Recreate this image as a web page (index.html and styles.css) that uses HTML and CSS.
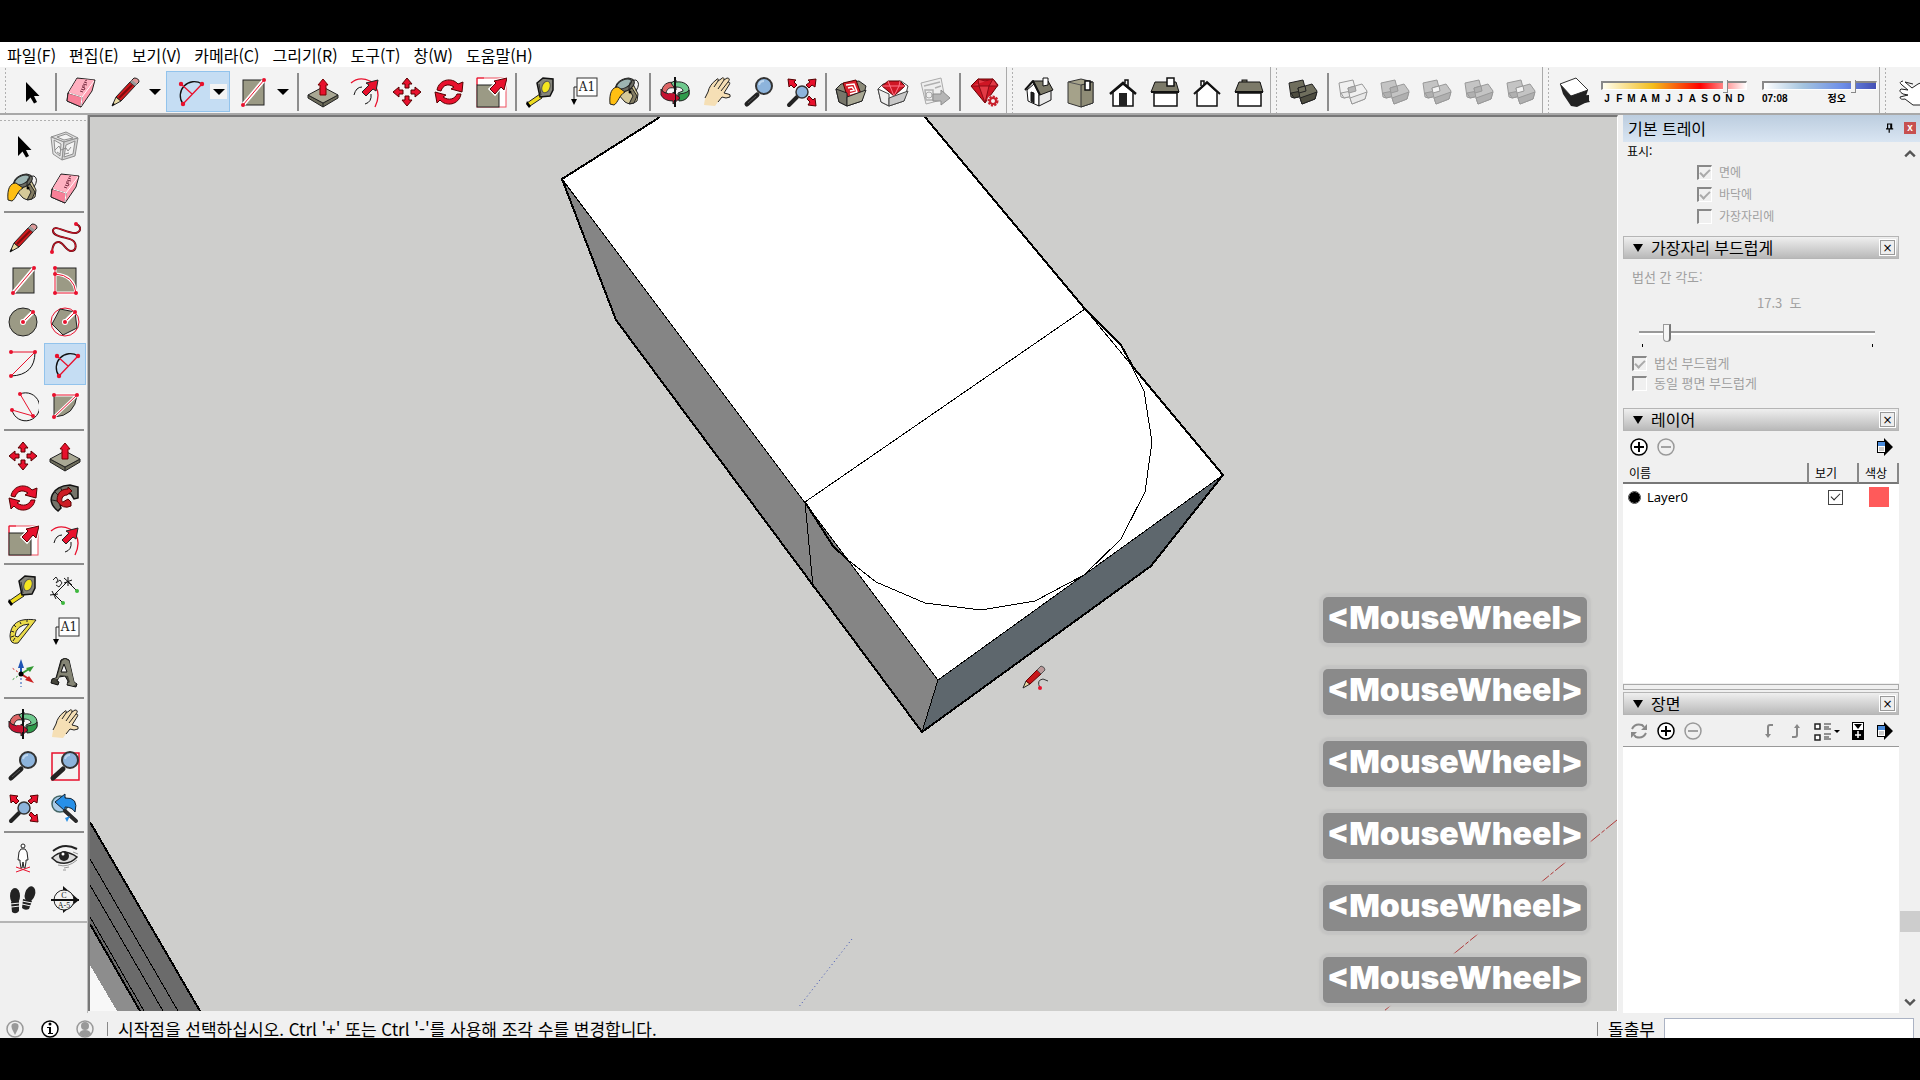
FILE: index.html
```html
<!DOCTYPE html>
<html lang="ko">
<head>
    <meta charset="UTF-8">
    <title>SketchUp</title>
    <link rel="stylesheet" href="styles.css">
</head>
<body>

<!-- icon set -->
<svg class="icon-defs" aria-hidden="true">
    <symbol id="i-select" viewBox="0 0 32 32">
        <path d="M11 6V26L15.500 21.500L19 27.500L22 26L19 20H24.500Z" fill="#000"/>
    </symbol>
    <symbol id="i-component" viewBox="0 0 32 32">
        <g fill="none" stroke="#8f8f8f">
            <path d="M2 7L17 2L29 8L15 12Z" fill="#ddd"/>
            <path d="M2 7L15 12L13 30L4 24Z" fill="#e4e4e4"/>
            <path d="M15 12L29 8L26 26L13 30Z" fill="#d2d2d2"/>
            <path d="M5 10L12 14L11 26L6 22ZM17 15L26 11L24 24L15 27ZM8 7L17 4L24 8L15 10Z" fill="#f3f3f3"/>
            <path d="M6 20L10 16L12 20L17 18L19 21L22 17M8 22L11 24M16 24L20 23"/>
        </g>
    </symbol>
    <symbol id="i-eraser" viewBox="0 0 32 32">
        <g stroke="#222" stroke-linejoin="round">
            <path d="M12 2L30 4L27 15L16 31L2 25L3 17Z" fill="#ff9db0"/>
            <path d="M3 17L17 21L16 31L2 25Z" fill="#f77f97"/>
        </g>
        <path d="M12 3L29 4L17 20L4 16Z" fill="#ffb0c0"/>
        <path d="M4 17L17 21L29 5M17 21L16 30" stroke="#fff" fill="none"/>
        <path d="M15 15L18 16M16 13L19 14L20 12L17 11M17 10H20M18 8L22 9M19 6L22 7M20 5L22 4" stroke="#7d3045" fill="none"/>
    </symbol>
    <symbol id="i-pencil" viewBox="0 0 32 32">
        <g stroke="#222" stroke-linejoin="round">
            <path d="M3 30L7 21L12 25Z" fill="#e8d9a2"/>
            <path d="M7 21L21 6L26 10L12 25Z" fill="#d2191c"/>
            <path d="M21 6L25 2Q30 2 30 6L26 10Z" fill="#d99"/>
        </g>
        <path d="M21 6L23 4L28 8L26 10Z" fill="#999"/>
        <path d="M10 22L23 9" stroke="#7c0d10" stroke-width="2"/>
        <path d="M3 30L4 27L6 28Z"/>
    </symbol>
    <symbol id="i-freehand" viewBox="0 0 32 32">
        <g fill="none" stroke-linecap="round">
            <path d="M3 30Q4 19 10 20C15 21 17 29 22 29C28 29 28 21 23 18C18 15 3 15 4 8C6 2 18 12 27 11C33 9 32 4 27 2" stroke="#5d0a10" stroke-width="2"/>
            <path d="M3 30Q4 19 10 20C15 21 17 29 22 29C28 29 28 21 23 18C18 15 3 15 4 8C6 2 18 12 27 11C33 9 32 4 27 2" stroke="#d8172a"/>
        </g>
        <circle cx="3" cy="30" r="2" fill="#e8112d"/><circle cx="27" cy="2" r="2" fill="#e8112d"/>
    </symbol>
    <symbol id="i-rect" viewBox="0 0 32 32">
        <rect x="6" y="4" width="21" height="25" fill="#9b9a85" stroke="#222"/>
        <path d="M6 29L27 4" stroke="#fff" stroke-width="4"/>
        <path d="M6 29L27 4" stroke="#e8112d"/>
        <circle cx="6" cy="29" r="2" fill="#e8112d"/><circle cx="27" cy="4" r="2" fill="#e8112d"/>
    </symbol>
    <symbol id="i-rotrect" viewBox="0 0 32 32">
        <rect x="6" y="4" width="21" height="25" fill="#9b9a85" stroke="#222"/>
        <path d="M6 4V29H27Q25 11 6 10" fill="none" stroke="#fff" stroke-width="3"/>
        <path d="M6 4V29H27Q25 11 6 10" fill="none" stroke="#e8112d"/>
        <g fill="#e8112d"><circle cx="6" cy="4" r="2"/><circle cx="6" cy="10" r="2"/><circle cx="6" cy="29" r="2"/><circle cx="27" cy="29" r="2"/></g>
    </symbol>
    <symbol id="i-circle" viewBox="0 0 32 32">
        <circle cx="16" cy="16" r="14" fill="#9b9a85" stroke="#222"/>
        <path d="M16 16L26 6" stroke="#fff" stroke-width="4"/><path d="M16 16L26 6" stroke="#e8112d"/>
        <circle cx="16" cy="16" r="3" fill="#fff"/>
        <g fill="#e8112d"><circle cx="16" cy="16" r="2"/><circle cx="26" cy="6" r="2"/></g>
    </symbol>
    <symbol id="i-polygon" viewBox="0 0 32 32">
        <circle cx="16" cy="16" r="14" fill="none" stroke="#e8112d"/>
        <path d="M11 3L26 6L28 22L14 29L3 18Z" fill="#9b9a85" stroke="#222"/>
        <path d="M16 16L26 6" stroke="#fff" stroke-width="4"/><path d="M16 16L26 6" stroke="#e8112d"/>
        <circle cx="16" cy="16" r="3" fill="#fff"/>
        <g fill="#e8112d"><circle cx="16" cy="16" r="2"/><circle cx="26" cy="6" r="2"/></g>
    </symbol>
    <symbol id="i-arc" viewBox="0 0 32 32">
        <path d="M28 4Q28 27 4 28" fill="none" stroke="#111"/>
        <path d="M4 4H28L4 28" fill="none" stroke="#e8112d"/>
        <g fill="#e8112d"><circle cx="4" cy="4" r="2"/><circle cx="28" cy="4" r="2"/><circle cx="4" cy="28" r="2"/></g>
    </symbol>
    <symbol id="i-arc2" viewBox="0 0 32 32">
        <path d="M10 28A14 14 0 0 1 29 8" fill="none" stroke="#111" stroke-width="1.300"/>
        <path d="M10 28L29 8M8 8L19 18" fill="none" stroke="#e8112d" stroke-width="1.300"/>
        <g fill="#e8112d"><circle cx="8" cy="8" r="2.200"/><circle cx="29" cy="8" r="2.200"/><circle cx="10" cy="28" r="2.200"/></g>
    </symbol>
    <symbol id="i-arc3" viewBox="0 0 32 32">
        <path d="M13 4A14 14 0 1 1 5 20" fill="none" stroke="#111"/>
        <path d="M13 4L26 26L5 20" fill="none" stroke="#e8112d"/>
        <g fill="#e8112d"><circle cx="13" cy="4" r="2"/><circle cx="26" cy="26" r="2"/><circle cx="5" cy="20" r="2"/></g>
    </symbol>
    <symbol id="i-pie" viewBox="0 0 32 32">
        <path d="M5 5H28Q26 26 5 27Z" fill="#9b9a85" stroke="#222"/>
        <path d="M5 5H28L5 27" fill="none" stroke="#fff" stroke-width="3"/>
        <path d="M5 5H28L5 27" fill="none" stroke="#e8112d"/>
        <g fill="#e8112d"><circle cx="5" cy="5" r="2"/><circle cx="28" cy="5" r="2"/><circle cx="5" cy="27" r="2"/></g>
    </symbol>
    <symbol id="i-pushpull" viewBox="0 0 32 32">
        <g stroke="#222" stroke-linejoin="round">
            <path d="M1 19V22L16 31L31 22V19L16 27Z" fill="#6d6c5a"/>
            <path d="M1 19L16 11L31 19L16 27Z" fill="#a9a894"/>
            <path d="M16 27V31"/>
            <path d="M16 3L21 9H19V19H13V9H11Z" fill="#e8112d" stroke="#700"/>
        </g>
    </symbol>
    <symbol id="i-offset" viewBox="0 0 32 32">
        <path d="M2 7Q10 0 21 5Q34 14 26 31" fill="none" stroke="#e8112d" stroke-width="1.300"/>
        <path d="M5 19Q7 11 13 11M22 18Q23 26 16 28" fill="none" stroke="#111"/>
        <path d="M29 4L27 15L24 13L17 20L13 16L20 9L17 7Z" fill="#e8112d" stroke="#222"/>
    </symbol>
    <symbol id="i-move" viewBox="0 0 32 32">
        <g fill="#e8112d" stroke="#500">
            <path d="M16 2L21 8H18V12H14V8H11Z"/>
            <path d="M30 16L24 21V18H20V14H24V11Z"/>
            <path d="M16 30L11 24H14V20H18V24H21Z"/>
            <path d="M2 16L8 11V14H12V18H8V21Z"/>
        </g>
    </symbol>
    <symbol id="i-rotate" viewBox="0 0 32 32">
        <g fill="#e8112d" stroke="#500">
            <path d="M4 14C6 3 19 1 25 8L30 6L29 16L18 13L21 11C15 7 10 9 8 15Z"/>
            <path d="M28 18C26 29 13 31 7 24L4 27L2 16L13 19L10 21C16 25 22 23 24 18Z"/>
        </g>
    </symbol>
    <symbol id="i-scale" viewBox="0 0 32 32">
        <rect x="2" y="2" width="29" height="29" fill="#fff" stroke="#ef5060"/>
        <path d="M2 9V2H9" fill="none" stroke="#e8112d"/>
        <rect x="2" y="9" width="22" height="22" fill="#9b9a85" stroke="#222"/>
        <path d="M32 2L29 14L26 11L20 18L15 13L21 7L19 5Z" fill="#e8112d" stroke="#fff" stroke-width="3"/>
        <path d="M32 2L29 14L26 11L20 18L15 13L21 7L19 5Z" fill="#e8112d" stroke="#500"/>
    </symbol>
    <symbol id="i-follow" viewBox="0 0 32 32">
        <path d="M9 29C-4 19 3 4 21 3L29 5V16L25 17L22 12C13 9 9 17 12 26Z" fill="#75746a" stroke="#111" stroke-width="1.500"/>
        <path d="M5 9L10 14M11 5L14 10M3 18L8 19" stroke="#222"/>
        <path d="M8 19C8 9 14 7 19 7V5L23 9L18 13C12 13 12 20 14 20L19 17L22 20V24Q14 28 8 19Z" fill="#cc1c24" stroke="#500"/>
    </symbol>
    <symbol id="i-tape" viewBox="0 0 32 32">
        <path d="M2 27L15 18L17 22L5 30Z" fill="#eedc1f" stroke="#222"/>
        <path d="M2 25L6 30L4 32L1 28Z"/>
        <path d="M12 7L18 2L28 3V14L25 20L15 21Z" fill="#85857b" stroke="#111" stroke-width="1.500"/>
        <ellipse cx="21" cy="11" rx="4" ry="6" fill="#f4e51f" stroke="#555" transform="rotate(20 21 11)"/>
        <path d="M14 8L16 19" stroke="#333"/>
    </symbol>
    <symbol id="i-text" viewBox="0 0 32 32">
        <path d="M11 11H7V23" fill="none" stroke="#222"/>
        <path d="M4 23H10L7 29Z"/>
        <rect x="10" y="2" width="20" height="18" fill="#fff" stroke="#333"/>
        <text x="20" y="15" class="icon-text">A1</text>
    </symbol>
    <symbol id="i-paint" viewBox="0 0 32 32">
        <g stroke="#222" stroke-linejoin="round">
            <path d="M24 8L29 18L28 25Q22 30 16 26L8 17L11 11Z" fill="#d5c999"/>
            <path d="M23 12L28 20L25 27L20 28L24 20L20 14Z" fill="#837c62"/>
            <ellipse cx="16" cy="9" rx="10" ry="6" fill="#6b6b62" transform="rotate(-25 16 9)"/>
            <ellipse cx="15" cy="8" rx="8" ry="4" fill="#9db5b3" transform="rotate(-25 15 8)"/>
            <path d="M20 15Q19 3 27 4Q32 7 27 15" fill="none"/>
            <path d="M1 28C0 17 3 11 9 11L16 16C10 19 9 27 5 29Z" fill="#ffbf12"/>
        </g>
        <circle cx="21" cy="16" r="1.500"/>
    </symbol>
    <symbol id="i-dimension" viewBox="0 0 32 32">
        <path d="M5 21L19 7M3 17L7 25M1 21L9 20M15 4L23 11M15 9L23 6M19 3V12M5 20L14 29M19 8L28 17" fill="none" stroke="#111"/>
        <circle cx="14" cy="29" r="2" fill="#3db83d"/><circle cx="28" cy="17" r="2" fill="#3db83d"/>
        <path d="M4 6L7 3L9 6L7 9L11 6L13 9L10 13L7 11" fill="none" stroke="#222"/>
    </symbol>
    <symbol id="i-protractor" viewBox="0 0 32 32">
        <path d="M3 20C4 5 15 2 29 4L11 27Q3 29 3 20Z" fill="#eadb4a" stroke="#222"/>
        <path d="M8 20Q9 9 22 8L11 21Z" fill="#f3f3f3" stroke="#222"/>
        <path d="M4 15L7 16M7 9L9 11M13 6L14 8M20 4V6M4 21L7 20M6 25L8 22" stroke="#222"/>
    </symbol>
    <symbol id="i-axes" viewBox="0 0 32 32">
        <path d="M14 16V29" stroke="#2055b5" stroke-dasharray="2 2"/>
        <path d="M14 16L5 10" stroke="#c22" stroke-dasharray="2 2"/>
        <path d="M14 16L5 22" stroke="#393" stroke-dasharray="2 2"/>
        <path d="M14 16V5" stroke="#2055b5" stroke-width="2"/><path d="M14 1L17 10H11Z" fill="#2055b5"/>
        <path d="M14 16L22 11" stroke="#393" stroke-width="2"/><path d="M27 8L23 14L19 10Z" fill="#393"/>
        <path d="M14 16L22 21" stroke="#c22" stroke-width="2"/><path d="M27 25L18 22L22 18Z" fill="#c22"/>
        <circle cx="14" cy="16" r="2.500"/>
    </symbol>
    <symbol id="i-3dtext" viewBox="0 0 32 32">
        <path d="M3 21L7 20L12 2L16 0L20 2L25 24L28 26L27 29L18 27L19 23L16 18L10 19L8 23L10 24L9 27L2 25Z" fill="#46463c" stroke="#111"/>
        <path d="M16 1L20 3L25 24L27 26L24 28L18 26L21 24L19 18L11 17L9 21L5 21L8 20L13 3Z" fill="#858575"/>
        <path d="M15 6L18 14H12Z" fill="#f3f3f3" stroke="#111"/>
    </symbol>
    <symbol id="i-orbit" viewBox="0 0 32 32">
        <g stroke="#222">
            <path d="M3 14C4 7 12 5 15 7V12C10 11 8 13 7 17L4 17Z" fill="#d66"/>
            <path d="M12 7L17 4V6C25 5 30 9 30 14V18Q27 24 19 24V17L24 15C24 12 20 11 17 11V14Z" fill="#6fc98e"/>
            <path d="M30 14V19Q27 25 20 25V18Q29 17 30 14Z" fill="#2f9b4b"/>
            <path d="M2 13V19Q5 25 14 25V28L21 22L14 16V18Q4 18 2 13Z" fill="#c41230"/>
        </g>
        <path d="M16 1V31" stroke="#111" stroke-width="2"/>
        <path d="M10 17L16 18V24L10 24Z" fill="#c41230"/>
    </symbol>
    <symbol id="i-pan" viewBox="0 0 32 32">
        <path d="M3 29C4 22 5 19 7 16C8 11 11 7 15 4Q18 1 18 5L20 3Q23 0 24 3L26 2Q30 2 27 6Q30 5 28 9L23 17L27 18Q30 18 29 21Q25 23 21 21L17 26L14 30Z" fill="#f5dfb5"/>
        <path d="M4 22L7 16C8 11 11 7 15 4Q18 1 17 5L13 11M17 5L20 3Q23 0 23 4L17 13M23 4L26 2Q30 2 27 6L20 15M27 6Q30 6 28 9L23 17L27 18Q30 18 29 21Q25 23 21 21L17 26" fill="none" stroke="#222"/>
    </symbol>
    <symbol id="i-zoom" viewBox="0 0 32 32">
        <path d="M4 28L14 19" stroke="#222" stroke-width="5" stroke-linecap="round"/>
        <path d="M5 27L13 20" stroke="#555"/>
        <circle cx="21" cy="10" r="8" fill="#8db4dc" stroke="#333" stroke-width="2"/>
        <path d="M16 9Q17 5 21 5" fill="none" stroke="#bcd6ef" stroke-width="2"/>
    </symbol>
    <symbol id="i-zoomwin" viewBox="0 0 32 32">
        <rect x="3" y="3" width="27" height="27" fill="none" stroke="#e8112d" stroke-width="1.500"/>
        <path d="M4 28L14 19" stroke="#222" stroke-width="5" stroke-linecap="round"/>
        <circle cx="21" cy="10" r="8" fill="#8db4dc" stroke="#333" stroke-width="2"/>
        <path d="M16 9Q17 5 21 5" fill="none" stroke="#bcd6ef" stroke-width="2"/>
    </symbol>
    <symbol id="i-zoomext" viewBox="0 0 32 32">
        <path d="M4 29L12 21" stroke="#222" stroke-width="4" stroke-linecap="round"/>
        <circle cx="17" cy="16" r="6" fill="#8db4dc" stroke="#333" stroke-width="1.500"/>
        <g fill="#e8112d" stroke="#500">
            <path d="M3 3L11 4L9 6L12 9L9 12L6 9L4 11Z"/>
            <path d="M31 3L30 11L27 9L24 12L21 9L25 6L23 4Z"/>
            <path d="M31 30L23 29L25 26L22 23L24 20L28 24L30 22Z"/>
        </g>
    </symbol>
    <symbol id="i-previous" viewBox="0 0 32 32">
        <circle cx="11" cy="12" r="8" fill="#a9cbe8" stroke="#466" stroke-width="1.500"/>
        <path d="M6 10L16 2V6Q30 5 26 20Q23 15 16 15V19Z" fill="#2790e8" stroke="#123"/>
        <path d="M16 20L28 30" stroke="#fff" stroke-width="6"/>
        <path d="M16 19L27 29" stroke="#2b2b2b" stroke-width="4" stroke-linecap="round"/>
        <path d="M16 26L21 24L18 30Z" fill="#2790e8"/>
    </symbol>
    <symbol id="i-camera" viewBox="0 0 32 32">
        <g fill="#fff" stroke="#222">
            <circle cx="16" cy="4" r="2"/>
            <path d="M14 7H18L20 10L21 18L19 18V20L18 26H17L16 20L15 26H14L13 20V18H11L12 10Z"/>
        </g>
        <path d="M9 25L23 30M23 25L9 30" stroke="#e8112d"/>
    </symbol>
    <symbol id="i-look" viewBox="0 0 32 32">
        <path d="M4 9Q15 0 28 7" fill="none" stroke="#222" stroke-width="2"/>
        <path d="M3 16Q14 5 28 15Q20 24 8 20Z" fill="#ddd" stroke="#222" stroke-width="1.500"/>
        <circle cx="15" cy="14" r="5" fill="#222"/><circle cx="14" cy="12" r="1.500" fill="#fff"/>
        <path d="M9 23Q19 26 28 18M15 26L20 25M14 28H17M24 10L29 12" fill="none" stroke="#999"/>
    </symbol>
    <symbol id="i-walk" viewBox="0 0 32 32">
        <g fill="#222">
            <ellipse cx="8" cy="12" rx="5" ry="8"/><path d="M4 18L12 17L12 27Q9 31 5 28Z"/>
            <ellipse cx="23" cy="10" rx="5" ry="8" transform="rotate(18 23 10)"/><path d="M16 15L25 17L22 25Q18 27 15 24Z"/>
        </g>
        <path d="M3 20L13 19M4 23L13 22M15 17L25 19M15 20L24 22" stroke="#f3f3f3"/>
    </symbol>
    <symbol id="i-section" viewBox="0 0 32 32">
        <path d="M14 2L30 16L14 29Z" fill="#111"/>
        <circle cx="15" cy="16" r="10" fill="#f3f3f3" stroke="#222"/>
        <path d="M2 16H30" stroke="#111" stroke-width="2"/>
        <text x="15" y="14" class="icon-text small">C</text><text x="15" y="24" class="icon-text small">A-5</text>
    </symbol>
    <symbol id="i-wh1" viewBox="0 0 32 32">
        <path d="M1 13L6 8L24 5L31 10L27 25L12 30L4 26Z" fill="#8b8a78" stroke="#222"/>
        <path d="M8 7L21 4L26 18L13 23Z" fill="#d8202b" stroke="#500"/>
        <path d="M11 9L19 8L22 16L15 18M13 12L17 11L19 14L15 15" fill="none" stroke="#fff" stroke-width="1.500"/>
        <path d="M1 13L12 17V30L4 26Z" fill="#77766a" stroke="#222"/>
        <path d="M12 21L31 14L27 25L12 30Z" fill="#a9a894" stroke="#222"/>
    </symbol>
    <symbol id="i-wh2" viewBox="0 0 32 32">
        <path d="M1 13L6 8L24 5L31 10L27 25L12 30L4 26Z" fill="#fff" stroke="#444"/>
        <path d="M5 10L11 5H23L28 10L17 20Z" fill="#cf1624" stroke="#500"/>
        <path d="M5 10H28M11 5L13 10L17 20L22 10L23 5" fill="none" stroke="#f78"/>
        <path d="M1 13L12 18V30L4 26Z" fill="#eee" stroke="#444"/>
        <path d="M12 22L31 15L27 25L12 30Z" fill="#c8c8c8" stroke="#444"/>
    </symbol>
    <symbol id="i-layout" viewBox="0 0 32 32">
        <path d="M2 7L22 2L26 23L7 28Z" fill="#eee" stroke="#aaa"/>
        <path d="M5 10L21 6M6 14H14V24H7ZM16 12L22 10" fill="none" stroke="#b0b0b0" stroke-width="1.500"/>
        <circle cx="10" cy="19" r="3" fill="none" stroke="#aaa"/>
        <path d="M14 18H22V14L31 22L22 29V25H14Z" fill="#b5b5b5" stroke="#8d8d8d"/>
    </symbol>
    <symbol id="i-ruby" viewBox="0 0 32 32">
        <path d="M2 10L9 3H24L29 9L16 27Z" fill="#cf1624" stroke="#600"/>
        <path d="M2 10H29L24 3L20 10L16 27L10 10L9 3L16 5L24 3" fill="#e23a45" stroke="#8c0b14"/>
        <circle cx="24" cy="25" r="6" fill="#f3f3f3"/>
        <circle cx="24" cy="25" r="4" fill="none" stroke="#c8202b" stroke-width="3" stroke-dasharray="2 1"/>
        <circle cx="24" cy="25" r="3" fill="none" stroke="#c8202b" stroke-width="2"/>
    </symbol>
    <symbol id="i-iso" viewBox="0 0 32 32">
        <g stroke="#111" stroke-linejoin="round">
            <path d="M4 14L11 8L16 18V30L5 25Z" fill="#fff"/><path d="M16 19L28 13V24L16 30Z" fill="#e8e8e8"/>
            <path d="M10 5L25 5L30 14L17 19Z" fill="#7c7a69"/><path d="M20 2H25V9L20 10Z" fill="#fff"/>
            <path d="M8 16L11 17V27L8 25Z" fill="#222"/>
            <path d="M2 14L10 5L17 19" fill="none" stroke-width="2"/>
        </g>
    </symbol>
    <symbol id="i-top" viewBox="0 0 32 32">
        <path d="M3 6L16 3L28 6V27L16 31L3 27Z" fill="#a5a28a" stroke="#333"/>
        <path d="M16 9L28 6V27L16 31Z" fill="#8f8c76" stroke="#333"/>
        <path d="M3 6L16 9" stroke="#555"/><rect x="20" y="5" width="5" height="9" fill="#fff" stroke="#111" stroke-width="1.500"/>
    </symbol>
    <symbol id="i-front" viewBox="0 0 32 32">
        <path d="M6 16L16 8L26 16V30H6Z" fill="#fff" stroke="#111" stroke-width="1.500"/>
        <path d="M18 7V4H21V10" fill="none" stroke="#111" stroke-width="1.500"/>
        <path d="M3 18L16 7L29 18" fill="none" stroke="#111" stroke-width="2.500"/><rect x="12" y="17" width="8" height="13" fill="#222"/>
    </symbol>
    <symbol id="i-right" viewBox="0 0 32 32">
        <rect x="5" y="17" width="23" height="13" fill="#fff" stroke="#111" stroke-width="1.500"/>
        <path d="M6 6H27L30 16H2Z" fill="#7c7a69" stroke="#111"/><path d="M2 16H30" stroke="#111" stroke-width="2"/>
        <rect x="18" y="2" width="7" height="8" fill="#fff" stroke="#111" stroke-width="1.500"/>
    </symbol>
    <symbol id="i-back" viewBox="0 0 32 32">
        <path d="M10 10V5H13V9" fill="#fff" stroke="#111" stroke-width="1.500"/>
        <path d="M6 16L16 7L26 16V30H6Z" fill="#fff" stroke="#111" stroke-width="1.500"/>
        <path d="M3 18L16 6L29 18" fill="none" stroke="#111" stroke-width="2"/>
    </symbol>
    <symbol id="i-left" viewBox="0 0 32 32">
        <rect x="5" y="17" width="23" height="13" fill="#fff" stroke="#111" stroke-width="1.500"/>
        <rect x="9" y="4" width="5" height="3" fill="#7c7a69" stroke="#111"/>
        <path d="M6 6H27L30 16H2Z" fill="#7c7a69" stroke="#111"/><path d="M2 16H30" stroke="#111" stroke-width="2"/>
    </symbol>
    <symbol id="i-solid" viewBox="0 0 32 32">
        <g stroke="currentColor" stroke-linejoin="round">
            <path d="M2 7L16 4L20 19L7 22L4 21Z" fill="var(--solid)"/>
            <path d="M4 17L19 14L20 19L7 22Z" fill="var(--side)"/>
            <path d="M11 12L25 8L30 15L28 23L15 28L13 22Z" fill="var(--solid)"/>
            <path d="M13 22L30 16L28 23L15 28Z" fill="var(--side)"/>
            <path d="M11 12L18 10L19 15L12 17Z" fill="var(--core)"/>
        </g>
    </symbol>
    <symbol id="i-shadow" viewBox="0 0 32 32">
        <path d="M1 8L14 20L30 19L30 25L18 31L12 30L4 18Z" fill="#222"/>
        <path d="M1 8L17 2L29 14L12 20Z" fill="#fff" stroke="#333"/><path d="M12 20L13 29L31 26L27 20L29 14Z" fill="#222"/>
    </symbol>
    <symbol id="i-hand" viewBox="0 0 32 32">
        <path d="M7 5Q2 6 6 9L12 14L5 13Q2 15 7 18L12 19L4 21Q4 24 9 23L17 29L32 29V4L22 8L16 12L9 6L17 8" fill="#fff" stroke="#222"/>
    </symbol>
    <symbol id="i-plus" viewBox="0 0 18 18">
        <circle cx="9" cy="9" r="8" fill="#fff" stroke="#000" stroke-width="1.500"/><path d="M9 4V14M4 9H14" stroke="#000" stroke-width="2"/>
    </symbol>
    <symbol id="i-minus" viewBox="0 0 18 18">
        <circle cx="9" cy="9" r="8" fill="none" stroke="#999" stroke-width="1.500"/><path d="M4 9H14" stroke="#888" stroke-width="1.500"/>
    </symbol>
    <symbol id="i-refresh" viewBox="0 0 18 18">
        <path d="M2 7Q5 1 12 3L14 5M16 11Q13 17 6 15L4 13" fill="none" stroke="#888" stroke-width="2"/>
        <path d="M17 2V8H11ZM1 16V10H7Z" fill="#888"/>
    </symbol>
    <symbol id="i-detail" viewBox="0 0 18 18">
        <path d="M8 0L17 9L8 18V15H1V3H8Z"/><rect x="2" y="4" width="7" height="10" fill="#fff"/>
        <rect x="2" y="4" width="7" height="4" fill="#4a8cdc"/><path d="M3 10H8M3 12H8" stroke="#999"/>
    </symbol>
    <symbol id="i-down" viewBox="0 0 18 18"><path d="M13 3H10Q8 3 8 5V14" fill="none" stroke="#888" stroke-width="2"/><path d="M5 12H11L8 16Z" fill="#888"/></symbol>
    <symbol id="i-up" viewBox="0 0 18 18"><path d="M5 15H8Q10 15 10 13V5" fill="none" stroke="#888" stroke-width="2"/><path d="M7 6H13L10 2Z" fill="#888"/></symbol>
    <symbol id="i-list" viewBox="0 0 26 20">
        <path d="M1 3H6V8H1ZM1 14H6V19H1Z" fill="#fff" stroke="#222" stroke-width="1.500"/>
        <path d="M10 3H17M10 6H15M10 8H17M10 13H17M10 16H15M10 18H17" stroke="#333"/><path d="M20 9H26L23 12Z"/>
    </symbol>
    <symbol id="i-addscene" viewBox="0 0 18 18">
        <path d="M3 0H15V18H3Z"/><path d="M4 1H14V8H4Z" fill="#fff"/><path d="M5 2H13L9 7Z"/><path d="M9 9V16M6 13H12" stroke="#fff" stroke-width="1.500"/>
    </symbol>
    <symbol id="i-geo" viewBox="0 0 18 18">
        <circle cx="9" cy="9" r="8" fill="none" stroke="#999" stroke-width="1.500"/><path d="M9 15L6 9Q4 3 9 3Q14 3 12 9Z" fill="#999"/>
    </symbol>
    <symbol id="i-credit" viewBox="0 0 18 18">
        <circle cx="9" cy="9" r="8" fill="#fff" stroke="#000" stroke-width="1.500"/><circle cx="9" cy="4" r="1.500"/><path d="M6 7H10V13H12V14H7V13H8V8H6Z"/>
    </symbol>
    <symbol id="i-user" viewBox="0 0 18 18">
        <circle cx="9" cy="9" r="8" fill="#f0f0f0" stroke="#999" stroke-width="1.500"/><circle cx="9" cy="6" r="4" fill="#999"/><path d="M3 14Q4 10 9 10Q14 10 15 14Q9 19 3 14Z" fill="#999"/>
    </symbol>
</svg>

<div class="app">

    <nav class="menu">
        <a href="#">파일(F)</a>
        <a href="#">편집(E)</a>
        <a href="#">보기(V)</a>
        <a href="#">카메라(C)</a>
        <a href="#">그리기(R)</a>
        <a href="#">도구(T)</a>
        <a href="#">창(W)</a>
        <a href="#">도움말(H)</a>
    </nav>

    <div class="toolbar">
        <div class="group first">
            <button class="tool" aria-label="선택"><svg><use href="#i-select"/></svg></button>
            <span class="sep"></span>
            <button class="tool" aria-label="지우개"><svg><use href="#i-eraser"/></svg></button>
            <div class="split">
                <button class="tool" aria-label="선"><svg><use href="#i-pencil"/></svg></button>
                <button class="drop" aria-label="선 도구"></button>
            </div>
            <div class="split active">
                <button class="tool" aria-label="2점 호"><svg><use href="#i-arc2"/></svg></button>
                <button class="drop" aria-label="호 도구"></button>
            </div>
            <div class="split">
                <button class="tool" aria-label="직사각형"><svg><use href="#i-rect"/></svg></button>
                <button class="drop" aria-label="모양 도구"></button>
            </div>
            <span class="sep"></span>
            <button class="tool" aria-label="밀기/끌기"><svg><use href="#i-pushpull"/></svg></button>
            <button class="tool" aria-label="오프셋"><svg><use href="#i-offset"/></svg></button>
            <button class="tool" aria-label="이동"><svg><use href="#i-move"/></svg></button>
            <button class="tool" aria-label="회전"><svg><use href="#i-rotate"/></svg></button>
            <button class="tool" aria-label="배율"><svg><use href="#i-scale"/></svg></button>
            <span class="sep"></span>
            <button class="tool" aria-label="줄자"><svg><use href="#i-tape"/></svg></button>
            <button class="tool" aria-label="텍스트"><svg><use href="#i-text"/></svg></button>
            <button class="tool" aria-label="페인트통"><svg><use href="#i-paint"/></svg></button>
            <span class="sep"></span>
            <button class="tool" aria-label="궤도"><svg><use href="#i-orbit"/></svg></button>
            <button class="tool" aria-label="이동 보기"><svg><use href="#i-pan"/></svg></button>
            <button class="tool" aria-label="확대/축소"><svg><use href="#i-zoom"/></svg></button>
            <button class="tool" aria-label="범위 확대"><svg><use href="#i-zoomext"/></svg></button>
            <span class="sep"></span>
            <button class="tool" aria-label="3D Warehouse"><svg><use href="#i-wh1"/></svg></button>
            <button class="tool" aria-label="Extension Warehouse"><svg><use href="#i-wh2"/></svg></button>
            <button class="tool" aria-label="LayOut"><svg><use href="#i-layout"/></svg></button>
            <span class="sep"></span>
            <button class="tool" aria-label="확장 관리자"><svg><use href="#i-ruby"/></svg></button>
        </div>
        <div class="group">
            <button class="tool" aria-label="등각투영"><svg><use href="#i-iso"/></svg></button>
            <button class="tool" aria-label="평면"><svg><use href="#i-top"/></svg></button>
            <button class="tool" aria-label="정면"><svg><use href="#i-front"/></svg></button>
            <button class="tool" aria-label="우측면"><svg><use href="#i-right"/></svg></button>
            <button class="tool" aria-label="뒷면"><svg><use href="#i-back"/></svg></button>
            <button class="tool" aria-label="좌측면"><svg><use href="#i-left"/></svg></button>
        </div>
        <div class="group">
            <button class="tool solid" aria-label="외부 쉘"><svg><use href="#i-solid"/></svg></button>
            <span class="sep"></span>
            <button class="tool solid off wire" aria-label="교차"><svg><use href="#i-solid"/></svg></button>
            <button class="tool solid off" aria-label="결합"><svg><use href="#i-solid"/></svg></button>
            <button class="tool solid off hollow" aria-label="빼기"><svg><use href="#i-solid"/></svg></button>
            <button class="tool solid off" aria-label="자르기"><svg><use href="#i-solid"/></svg></button>
            <button class="tool solid off hollow" aria-label="분할"><svg><use href="#i-solid"/></svg></button>
        </div>
        <div class="group shadows">
            <button class="tool" aria-label="그림자"><svg><use href="#i-shadow"/></svg></button>
            <div class="sun months">
                <input type="range" min="0" max="100" value="87" aria-label="날짜">
                <div class="ticks"><span>J</span><span>F</span><span>M</span><span>A</span><span>M</span><span>J</span><span>J</span><span>A</span><span>S</span><span>O</span><span>N</span><span>D</span></div>
            </div>
            <div class="sun hours">
                <input type="range" min="0" max="100" value="81" aria-label="시간">
                <div class="ticks"><span>07:08</span><span>정오</span></div>
            </div>
        </div>
        <div class="group last">
            <button class="tool" aria-label="상호 작용"><svg><use href="#i-hand"/></svg></button>
        </div>
    </div>

    <div class="work">
        <div class="side">
            <div class="palette">
                <button class="tool" aria-label="선택"><svg><use href="#i-select"/></svg></button>
                <button class="tool" aria-label="구성 요소"><svg><use href="#i-component"/></svg></button>
                <button class="tool" aria-label="페인트통"><svg><use href="#i-paint"/></svg></button>
                <button class="tool" aria-label="지우개"><svg><use href="#i-eraser"/></svg></button>
                <span class="rule"></span>
                <button class="tool" aria-label="선"><svg><use href="#i-pencil"/></svg></button>
                <button class="tool" aria-label="자유곡선"><svg><use href="#i-freehand"/></svg></button>
                <button class="tool" aria-label="직사각형"><svg><use href="#i-rect"/></svg></button>
                <button class="tool" aria-label="회전된 직사각형"><svg><use href="#i-rotrect"/></svg></button>
                <button class="tool" aria-label="원"><svg><use href="#i-circle"/></svg></button>
                <button class="tool" aria-label="다각형"><svg><use href="#i-polygon"/></svg></button>
                <button class="tool" aria-label="호"><svg><use href="#i-arc"/></svg></button>
                <button class="tool active" aria-label="2점 호"><svg><use href="#i-arc2"/></svg></button>
                <button class="tool" aria-label="3점 호"><svg><use href="#i-arc3"/></svg></button>
                <button class="tool" aria-label="파이"><svg><use href="#i-pie"/></svg></button>
                <span class="rule"></span>
                <button class="tool" aria-label="이동"><svg><use href="#i-move"/></svg></button>
                <button class="tool" aria-label="밀기/끌기"><svg><use href="#i-pushpull"/></svg></button>
                <button class="tool" aria-label="회전"><svg><use href="#i-rotate"/></svg></button>
                <button class="tool" aria-label="따라가기"><svg><use href="#i-follow"/></svg></button>
                <button class="tool" aria-label="배율"><svg><use href="#i-scale"/></svg></button>
                <button class="tool" aria-label="오프셋"><svg><use href="#i-offset"/></svg></button>
                <span class="rule"></span>
                <button class="tool" aria-label="줄자"><svg><use href="#i-tape"/></svg></button>
                <button class="tool" aria-label="치수"><svg><use href="#i-dimension"/></svg></button>
                <button class="tool" aria-label="각도기"><svg><use href="#i-protractor"/></svg></button>
                <button class="tool" aria-label="텍스트"><svg><use href="#i-text"/></svg></button>
                <button class="tool" aria-label="축"><svg><use href="#i-axes"/></svg></button>
                <button class="tool" aria-label="3D 텍스트"><svg><use href="#i-3dtext"/></svg></button>
                <span class="rule"></span>
                <button class="tool" aria-label="궤도"><svg><use href="#i-orbit"/></svg></button>
                <button class="tool" aria-label="이동 보기"><svg><use href="#i-pan"/></svg></button>
                <button class="tool" aria-label="확대/축소"><svg><use href="#i-zoom"/></svg></button>
                <button class="tool" aria-label="창 확대"><svg><use href="#i-zoomwin"/></svg></button>
                <button class="tool" aria-label="범위 확대"><svg><use href="#i-zoomext"/></svg></button>
                <button class="tool" aria-label="이전"><svg><use href="#i-previous"/></svg></button>
                <span class="rule"></span>
                <button class="tool" aria-label="카메라 배치"><svg><use href="#i-camera"/></svg></button>
                <button class="tool" aria-label="둘러보기"><svg><use href="#i-look"/></svg></button>
                <button class="tool" aria-label="걷기"><svg><use href="#i-walk"/></svg></button>
                <button class="tool" aria-label="단면"><svg><use href="#i-section"/></svg></button>
            </div>
        </div>

        <main class="viewport">
            <svg class="model" viewBox="90 117 1527 894" preserveAspectRatio="xMinYMin slice">
                <g shape-rendering="crispEdges">
                    <!-- box -->
                    <path d="M562 179L616 320L922 732L938 680Z" fill="#858585"/>
                    <path d="M938 680L922 732L1151 566L1223 475Z" fill="#5e676d"/>
                    <path d="M660 117L562 179L938 680L1223 475L925 117Z" fill="#fff"/>
                    <path d="M1085 309L1121 345L1133 366Z" fill="#fff"/>
                    <path d="M562 179L938 680L1223 475M938 680L922 732M805 502L813 587M805 502L1085 309" class="edge"/>
                    <path d="M1085 309L1133 367M1121 345L1144 391L1152 442L1145 492L1121 539L1084 575L1035 601L981 610L925 603L876 582L848 560" class="edge"/>
                    <path d="M660 117L562 179L616 320L922 732L1151 566L1223 475L1133 367L1121 345L1085 309L925 117M805 502L833 546L848 560" class="edge bold"/>
                    <!-- second object, bottom left -->
                    <path d="M90 822L200 1011H90Z" fill="#6b6b6b"/>
                    <path d="M90 924L140 1011H90Z" fill="#8d8d8d"/>
                    <path d="M90 965L117 1011H90Z" fill="#f8f8f8"/>
                    <path d="M90 859L178 1011M90 885L163 1011M90 917L144 1011" class="edge"/>
                    <path d="M90 822L200 1011M90 924L140 1011" class="edge bold"/>
                </g>
                <!-- axes -->
                <path d="M852 939L798 1008" stroke="#3a4fb5" stroke-dasharray="1 3"/>
                <path d="M1617 820L1384 1011" stroke="#b03a3a" stroke-dasharray="14 2 4 2"/>
                <!-- pencil cursor -->
                <g>
                    <path d="M1023 688L1026 681L1030 684Z" fill="#e8d9a2" stroke="#222"/>
                    <path d="M1026 681L1037 670L1041 674L1030 684Z" fill="#c8161a" stroke="#600"/>
                    <path d="M1037 670L1041 666Q1045 667 1045 670L1041 674Z" fill="#b99" stroke="#555"/>
                    <path d="M1040 688Q1036 680 1043 679L1048 681" fill="none" stroke="#333"/>
                    <circle cx="1040" cy="688" r="2" fill="#e8112d"/>
                </g>
            </svg>
            <div class="keys">
                <span>&lt;MouseWheel&gt;</span>
                <span>&lt;MouseWheel&gt;</span>
                <span>&lt;MouseWheel&gt;</span>
                <span>&lt;MouseWheel&gt;</span>
                <span>&lt;MouseWheel&gt;</span>
                <span>&lt;MouseWheel&gt;</span>
            </div>
        </main>

        <aside class="tray">
            <header class="tray-title">
                <h1>기본 트레이</h1>
                <button class="pin" aria-label="고정">
                    <svg viewBox="0 0 10 12"><path d="M2 1H7V7H2ZM0 7H9M6 1V7M4 7V12" fill="none" stroke="#000" stroke-width="1.500"/></svg>
                </button>
                <button class="close" aria-label="닫기">x</button>
            </header>
            <div class="tray-body">
                <div class="panels">
                    <section class="show">
                        <p>표시:</p>
                        <label><input type="checkbox" checked disabled> 면에</label>
                        <label><input type="checkbox" checked disabled> 바닥에</label>
                        <label><input type="checkbox" disabled> 가장자리에</label>
                    </section>

                    <section>
                        <header class="panel-title"><h2>가장자리 부드럽게</h2><button aria-label="패널 닫기">×</button></header>
                        <div class="soften">
                            <label for="angle">법선 간 각도:</label>
                            <output for="angle">17.3&nbsp; 도</output>
                            <input id="angle" type="range" min="0" max="180" value="17" disabled>
                            <div class="marks"><i></i><i></i></div>
                            <label class="check"><input type="checkbox" checked disabled> 법선 부드럽게</label>
                            <label class="check"><input type="checkbox" disabled> 동일 평면 부드럽게</label>
                        </div>
                    </section>

                    <section class="layers">
                        <header class="panel-title"><h2>레이어</h2><button aria-label="패널 닫기">×</button></header>
                        <div class="actions">
                            <button aria-label="레이어 추가"><svg><use href="#i-plus"/></svg></button>
                            <button aria-label="레이어 삭제"><svg><use href="#i-minus"/></svg></button>
                            <button class="push" aria-label="세부 정보"><svg><use href="#i-detail"/></svg></button>
                        </div>
                        <div class="list">
                            <table>
                                <thead>
                                    <tr><th>이름</th><th class="col-show">보기</th><th class="col-color">색상</th></tr>
                                </thead>
                                <tbody>
                                    <tr>
                                        <td><label><input type="radio" name="layer" checked> Layer0</label></td>
                                        <td class="col-show"><input type="checkbox" checked aria-label="보기"></td>
                                        <td class="col-color"><button class="swatch" aria-label="색상"></button></td>
                                    </tr>
                                </tbody>
                            </table>
                        </div>
                        <div class="splitter"></div>
                    </section>

                    <section class="scenes">
                        <header class="panel-title"><h2>장면</h2><button aria-label="패널 닫기">×</button></header>
                        <div class="actions">
                            <button aria-label="장면 업데이트"><svg><use href="#i-refresh"/></svg></button>
                            <button aria-label="장면 추가"><svg><use href="#i-plus"/></svg></button>
                            <button aria-label="장면 제거"><svg><use href="#i-minus"/></svg></button>
                            <button class="push" aria-label="아래로"><svg><use href="#i-down"/></svg></button>
                            <button aria-label="위로"><svg><use href="#i-up"/></svg></button>
                            <button class="wide" aria-label="보기 옵션"><svg><use href="#i-list"/></svg></button>
                            <button aria-label="세부 정보 표시"><svg><use href="#i-addscene"/></svg></button>
                            <button aria-label="메뉴"><svg><use href="#i-detail"/></svg></button>
                        </div>
                        <div class="scene-list"></div>
                    </section>
                </div>
                <div class="scroll">
                    <button aria-label="위로 스크롤"><svg viewBox="0 0 10 8"><path d="M1 6L5 2L9 6" /></svg></button>
                    <span class="thumb"></span>
                    <button aria-label="아래로 스크롤"><svg viewBox="0 0 10 8"><path d="M1 2L5 6L9 2" /></svg></button>
                </div>
            </div>
        </aside>
    </div>

    <footer class="status">
        <button aria-label="위치"><svg><use href="#i-geo"/></svg></button>
        <button aria-label="크레딧"><svg><use href="#i-credit"/></svg></button>
        <button aria-label="로그인"><svg><use href="#i-user"/></svg></button>
        <span class="bar"></span>
        <p>시작점을 선택하십시오. Ctrl '+' 또는 Ctrl '-'를 사용해 조각 수를 변경합니다.</p>
        <span class="bar"></span>
        <label for="vcb">돌출부</label>
        <input id="vcb" type="text">
    </footer>
</div>

</body>
</html>
```
FILE: styles.css
```css
* {
    box-sizing: border-box;
}

body {
    margin: 0;
    background: #000;
    color: #000;
    font-family: "Noto Sans CJK KR", sans-serif;
    font-size: 16px;
}

button {
    padding: 0;
    border: 0;
    background: none;
    font-family: inherit;
}

p, h1, h2 {
    margin: 0;
    font-weight: normal;
}

.icon-defs {
    display: none;
}

.icon-text {
    font: 12px "DejaVu Serif", serif;
    text-anchor: middle;
    fill: #222;
}

.icon-text.small {
    font: 8px "Liberation Serif", serif;
}

.app {
    display: flex;
    flex-direction: column;
    height: 100vh;
    padding: 42px 0;
}

/* menu */
.menu {
    display: flex;
    gap: 13px;
    height: 25px;
    padding-left: 7px;
    background: #fff;
    line-height: 27px;
}

.menu a {
    color: #000;
    text-decoration: none;
}

/* toolbar */
.toolbar {
    display: flex;
    height: 48px;
    background: #f3f3f3;
    border-bottom: 2px solid #a8a8a8;
}

.group {
    display: flex;
    align-items: center;
    padding: 3px 0 0 11px;
    border-right: 1px solid #aaa;
    background: radial-gradient(circle, #b0b0b0 1px, transparent 1px) 4px 4px / 3px 4px repeat-y;
}

.group.first {
    padding-left: 10px;
}

.group.shadows {
    flex: 1;
    padding-right: 2px;
    overflow: hidden;
}

.group.last {
    width: 40px;
    overflow: hidden;
    border-right: 0;
}

.tool {
    flex: none;
    width: 42px;
    height: 42px;
    padding: 5px;
    border: 0;
}

.tool svg {
    display: block;
    width: 32px;
    height: 32px;
}

.sep {
    width: 2px;
    height: 38px;
    margin: 0 3px;
    background: #8d8d8d;
}

.split {
    display: flex;
    align-items: center;
    width: 64px;
    height: 41px;
    padding-left: 2px;
}

.drop {
    width: 17px;
    height: 15px;
    background: #f3f3f3;
}

.drop::before {
    content: "";
    display: block;
    width: 0;
    margin: 0 auto;
    border: 6px solid transparent;
    border-top-color: #000;
    border-bottom: 0;
}

.active {
    background: #c5ddf3;
    box-shadow: inset 0 0 0 1px #92c3ec;
}

.solid {
    color: #222;
    --solid: #6f6e5d;
    --side: #4e4d40;
    --core: #6f6e5d;
}

.solid.off {
    color: #999;
    --solid: #c4c4c4;
    --side: #b0b0b0;
    --core: #b0b0b0;
}

.solid.off.wire {
    --solid: #f0f0f0;
    --side: #e8e8e8;
    --core: #b8b8b8;
}

.solid.off.hollow {
    --core: #f3f3f3;
}

.sun {
    margin-left: 5px;
    font: bold 10px "Liberation Sans", "Noto Sans CJK KR", sans-serif;
}

.months {
    flex: none;
    width: 146px;
}

.hours {
    flex: 1;
    margin-left: 15px;
}

.sun input {
    appearance: none;
    display: block;
    width: 100%;
    height: 9px;
    margin: 4px 0 4px;
    border: 1px solid #fff;
    border-top: 2px solid #888;
    border-left: 2px solid #888;
}

.months input {
    background: linear-gradient(90deg, #fffef0, #f3bd1b 35%, #f00 68%, #f66 80%, #fff);
}

.hours input {
    background: linear-gradient(90deg, #fff, #a4c4df 35%, #6d8ee8 70%, #4450b5);
}

.sun input::-webkit-slider-thumb {
    appearance: none;
    width: 5px;
    height: 13px;
    background: #f3f3f3;
    border-right: 1px solid #888;
    border-bottom: 1px solid #888;
}

.ticks {
    display: flex;
    height: 12px;
    line-height: 10px;
}

.months .ticks span {
    flex: 1;
    text-align: center;
}

.hours .ticks {
    gap: 40px;
    white-space: nowrap;
}

/* work area */
.work {
    flex: 1;
    display: flex;
    min-height: 0;
    background: #f0f0f0;
}

.side {
    width: 88px;
    border-right: 1px solid #bbb;
}

.palette {
    display: grid;
    grid-template-columns: 42px 42px;
    padding: 10px 2px 0;
    border-bottom: 2px solid #b5b5b5;
    background: radial-gradient(circle, #b0b0b0 1px, transparent 1px) 3px 4px / 4px 3px repeat-x #f3f3f3;
}

.rule {
    grid-column: span 2;
    height: 2px;
    margin: 2px 2px 4px;
    background: #8d8d8d;
}

.viewport {
    position: relative;
    flex: 1;
    min-width: 0;
    margin-bottom: 2px;
    border-top: 2px solid #777;
    border-left: 2px solid #777;
    border-right: 1px solid #fff;
    background: #cececc;
    overflow: hidden;
}

.model {
    display: block;
    width: 100%;
    height: 100%;
    fill: none;
}

.edge {
    fill: none;
    stroke: #000;
}

.edge.bold {
    stroke-width: 2;
}

.keys {
    position: absolute;
    right: 30px;
    bottom: 8px;
    display: flex;
    flex-direction: column;
    gap: 26px;
}

.keys span {
    width: 264px;
    height: 46px;
    border-radius: 5px;
    background: #8a8a8a;
    box-shadow: 0 0 2px 4px #c4c4c3;
    color: #fff;
    font: 900 32px/42px Inter, sans-serif;
    text-align: center;
}

/* tray */
.tray {
    display: flex;
    flex-direction: column;
    width: 302px;
    padding-left: 5px;
}

.tray-title {
    display: flex;
    align-items: center;
    gap: 10px;
    height: 27px;
    padding: 0 4px 2px 5px;
    background: linear-gradient(#bccddf, #d9e5f2);
}

.tray-title h1 {
    flex: 1;
    font-size: 16px;
    line-height: 24px;
}

.pin svg {
    display: block;
    width: 8px;
    height: 10px;
}

.close {
    width: 12px;
    height: 12px;
    background: #c75050;
    color: #fff;
    font: bold 10px/10px "Liberation Sans", sans-serif;
}

.tray-body {
    flex: 1;
    display: flex;
    min-height: 0;
}

.panels {
    flex: 1;
    display: flex;
    flex-direction: column;
    margin-right: 1px;
    font-size: 13px;
    line-height: 18px;
}

.panels input[type="checkbox"] {
    appearance: none;
    display: grid;
    place-items: center;
    width: 15px;
    height: 15px;
    margin: 0;
    border: 1px solid #fff;
    border-top: 2px solid #888;
    border-left: 2px solid #888;
}

.panels input[type="checkbox"]:checked::before {
    content: "";
    width: 4px;
    height: 8px;
    margin-bottom: 3px;
    border: solid #aaa;
    border-width: 0 2px 2px 0;
    transform: rotate(45deg);
}

.show {
    height: 94px;
    padding-left: 4px;
    font-size: 12px;
}

.show p {
    height: 19px;
}

.show label {
    display: flex;
    align-items: center;
    gap: 7px;
    height: 22px;
    padding-left: 70px;
    color: #a0a0a0;
}

.panel-title {
    display: flex;
    align-items: center;
    height: 23px;
    border: 1px solid #b5b5b5;
    background: linear-gradient(#efefef, #b9b9b9);
}

.panel-title::before {
    content: "";
    margin: 0 8px 0 9px;
    border: 5px solid transparent;
    border-top: 8px solid #000;
    border-bottom: 0;
}

.panel-title h2 {
    flex: 1;
    padding-bottom: 2px;
    font-size: 16px;
    line-height: 18px;
}

.panel-title button {
    width: 15px;
    height: 15px;
    margin-right: 3px;
    border: 1px solid #999;
    outline: 1px solid #fff;
    background: #eee;
    font: 12px/12px "DejaVu Sans", sans-serif;
}

.soften {
    display: flex;
    flex-direction: column;
    height: 149px;
    padding: 9px 24px 0 9px;
    color: #a0a0a0;
}

.soften > label {
    height: 26px;
}

.soften output {
    height: 18px;
    padding-left: 125px;
}

.soften input[type="range"] {
    appearance: none;
    height: 18px;
    margin: 12px 0 0 7px;
    background: linear-gradient(#999, #999) 0 7px / 100% 2px no-repeat, linear-gradient(#fff, #fff) 0 9px / 100% 2px no-repeat;
}

.soften input[type="range"]::-webkit-slider-thumb {
    appearance: none;
    width: 8px;
    height: 18px;
    margin-left: 2px;
    border: 1px solid #999;
    border-right: 2px solid #777;
    border-radius: 0 0 4px 4px;
    background: #f5f5f5;
}

.marks {
    display: flex;
    justify-content: space-between;
    margin: 2px 2px 6px 10px;
}

.marks i {
    width: 1px;
    height: 3px;
    background: #000;
}

.soften .check {
    display: flex;
    align-items: center;
    gap: 7px;
    height: 20px;
}

.actions {
    display: flex;
    align-items: center;
    gap: 9px;
    height: 32px;
    padding: 0 5px 0 7px;
}

.actions button {
    width: 18px;
    height: 18px;
}

.actions svg {
    display: block;
    width: 100%;
    height: 100%;
}

.actions .push {
    margin-left: auto;
}

.actions .wide {
    width: 26px;
    height: 20px;
}

.scenes .actions {
    border-bottom: 1px solid #999;
}

.list {
    height: 220px;
    background: #fff;
}

.list table {
    width: 100%;
    border-collapse: separate;
    border-spacing: 0;
    table-layout: fixed;
}

.list th {
    height: 21px;
    padding: 0 6px;
    border-right: 2px solid #888;
    border-bottom: 2px solid #777;
    background: #f0f0f0;
    font-size: 12px;
    font-weight: normal;
    line-height: 18px;
    text-align: left;
}

.list td {
    height: 26px;
    padding: 0 5px;
    font-family: "Noto Sans", sans-serif;
}

.list .col-show {
    width: 50px;
}

.list .col-color {
    width: 40px;
}

.list td.col-show {
    padding-left: 19px;
}

.list td.col-color {
    padding-left: 10px;
}

.list label {
    display: flex;
    align-items: center;
    gap: 6px;
}

.list input[type="radio"] {
    appearance: none;
    width: 13px;
    height: 13px;
    margin: 0;
    border: 1px solid #444;
    border-radius: 50%;
    background: radial-gradient(circle, #000 5px, #fff 6px);
}

.list input[type="checkbox"] {
    border: 1px solid #444;
}

.list input[type="checkbox"]:checked::before {
    border-color: #222;
    border-width: 0 1px 1px 0;
}

.swatch {
    display: block;
    width: 20px;
    height: 20px;
    background: #ff5a5a;
}

.splitter {
    height: 6px;
    margin: 1px 0 2px;
    border: 1px solid #aaa;
}

.scenes {
    flex: 1;
    display: flex;
    flex-direction: column;
}

.scene-list {
    flex: 1;
    background: #fff;
}

.scroll {
    display: flex;
    flex-direction: column;
    width: 20px;
}

.scroll button {
    width: 19px;
    height: 23px;
}

.scroll svg {
    width: 12px;
    height: 10px;
    fill: none;
    stroke: #555;
    stroke-width: 2px;
}

.thumb {
    height: 21px;
    margin-top: auto;
    margin-bottom: 58px;
    background: #cdcdcd;
}

/* status bar */
.status {
    display: flex;
    align-items: center;
    height: 25px;
    padding: 6px 6px 0;
    background: #f0f0f0;
    overflow: hidden;
}

.status button {
    width: 18px;
    height: 18px;
    margin-right: 17px;
}

.status svg {
    display: block;
    width: 18px;
    height: 18px;
}

.bar {
    width: 1px;
    height: 14px;
    margin: 0 10px 0 -4px;
    background: #888;
}

.status p {
    flex: 1;
    font-size: 17px;
    line-height: 20px;
    white-space: nowrap;
}

.status label {
    margin-right: 9px;
    font-size: 17px;
    line-height: 20px;
}

.status input {
    width: 250px;
    height: 24px;
    margin-top: 2px;
    border: 1px solid #abb3c4;
    background: #fff;
}
```
